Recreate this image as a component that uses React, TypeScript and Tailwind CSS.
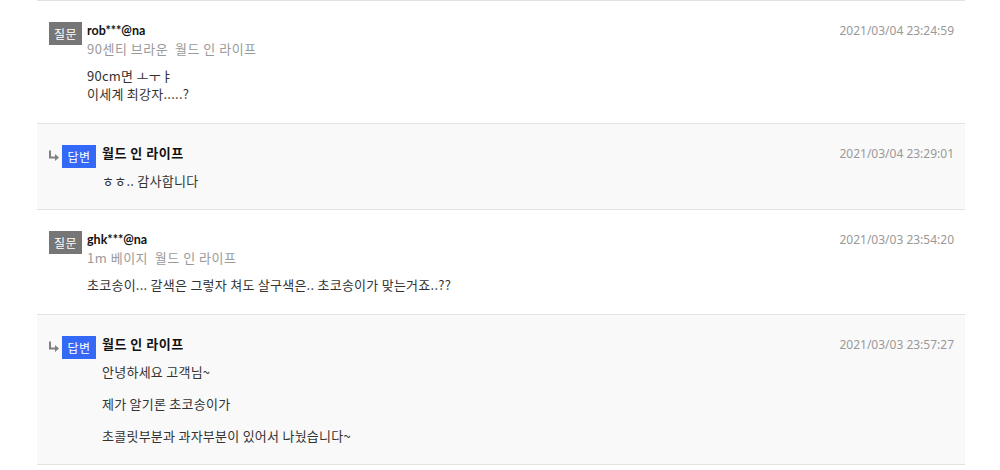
import React from "react";

const font = { fontFamily: '"Noto Sans CJK KR", "Noto Sans", sans-serif' };
const dateFont = { fontFamily: '"Noto Sans", "Noto Sans CJK KR", sans-serif' };
const nameFont = { fontFamily: 'Lato, "Noto Sans CJK KR", sans-serif' };

function Arrow() {
  return (
    <svg width="12" height="11" viewBox="0 0 12 11" className="mr-[2px] mt-[5px]">
      <path d="M2 0.5 V7.5 H7.5" stroke="#808080" strokeWidth="2" fill="none" />
      <path d="M7 4 L11 7.5 L7 11 Z" fill="#808080" />
    </svg>
  );
}

function Question({ name, sub, date, lines }: { name: string; sub: string; date: string; lines: string[] }) {
  return (
    <div className="flex justify-between border-b border-[#e2e2e2] pl-[12px] pr-[11px] pt-[21px] pb-[20px]">
      <div className="flex items-start">
        <div className="w-[33px] h-[23px] bg-[#767676] text-white text-[12px] tracking-[0.5px] flex items-center justify-center">질문</div>
        <div className="ml-[5px] text-[13px] leading-[18px] tracking-[0.25px]">
          <div className="font-bold text-[12.5px] tracking-normal text-[#111]" style={nameFont}>{name}</div>
          <div className="text-[#9a9a9a] whitespace-pre tracking-[0.5px]">{sub}</div>
          <div className="mt-[9px] text-[#333]">
            {lines.map((l, i) => (
              <div key={i}>{l}</div>
            ))}
          </div>
        </div>
      </div>
      <div className="text-[12px] leading-[18px] text-[#999]" style={dateFont}>{date}</div>
    </div>
  );
}

function Answer({ date, paras }: { date: string; paras: string[] }) {
  return (
    <div className="flex justify-between border-b border-[#e2e2e2] bg-[#f9f9f9] pl-[11px] pr-[11px] pt-[21px] pb-[19px]">
      <div className="flex items-start">
        <Arrow />
        <div className="w-[34px] h-[23px] bg-[#3468f6] text-white text-[12px] tracking-[0.5px] flex items-center justify-center">답변</div>
        <div className="ml-[6px] -mt-[1px] text-[13px] leading-[18px] tracking-[0.25px]">
          <div className="font-bold text-[#111] tracking-[0.5px]">월드 인 라이프</div>
          <div className="mt-[10px] text-[#333]">
            {paras.map((p, i) => (
              <div key={i} className={i > 0 ? "mt-[14px]" : ""}>{p}</div>
            ))}
          </div>
        </div>
      </div>
      <div className="text-[12px] leading-[18px] text-[#999]" style={dateFont}>{date}</div>
    </div>
  );
}

export default function App() {
  return (
    <div className="w-[1000px] h-[470px] bg-white overflow-hidden" style={font}>
      <div className="ml-[37px] w-[928px] border-t border-[#e2e2e2]">
        <Question
          name="rob***@na"
          sub="90센티 브라운  월드 인 라이프"
          date="2021/03/04 23:24:59"
          lines={["90cm면 ㅗㅜㅑ", "이세계 최강자.....?"]}
        />
        <Answer date="2021/03/04 23:29:01" paras={["ㅎㅎ.. 감사합니다"]} />
        <Question
          name="ghk***@na"
          sub="1m 베이지  월드 인 라이프"
          date="2021/03/03 23:54:20"
          lines={["초코송이... 갈색은 그렇자 쳐도 살구색은.. 초코송이가 맞는거죠..??"]}
        />
        <Answer
          date="2021/03/03 23:57:27"
          paras={["안녕하세요 고객님~", "제가 알기론 초코송이가", "초콜릿부분과 과자부분이 있어서 나눴습니다~"]}
        />
      </div>
    </div>
  );
}
